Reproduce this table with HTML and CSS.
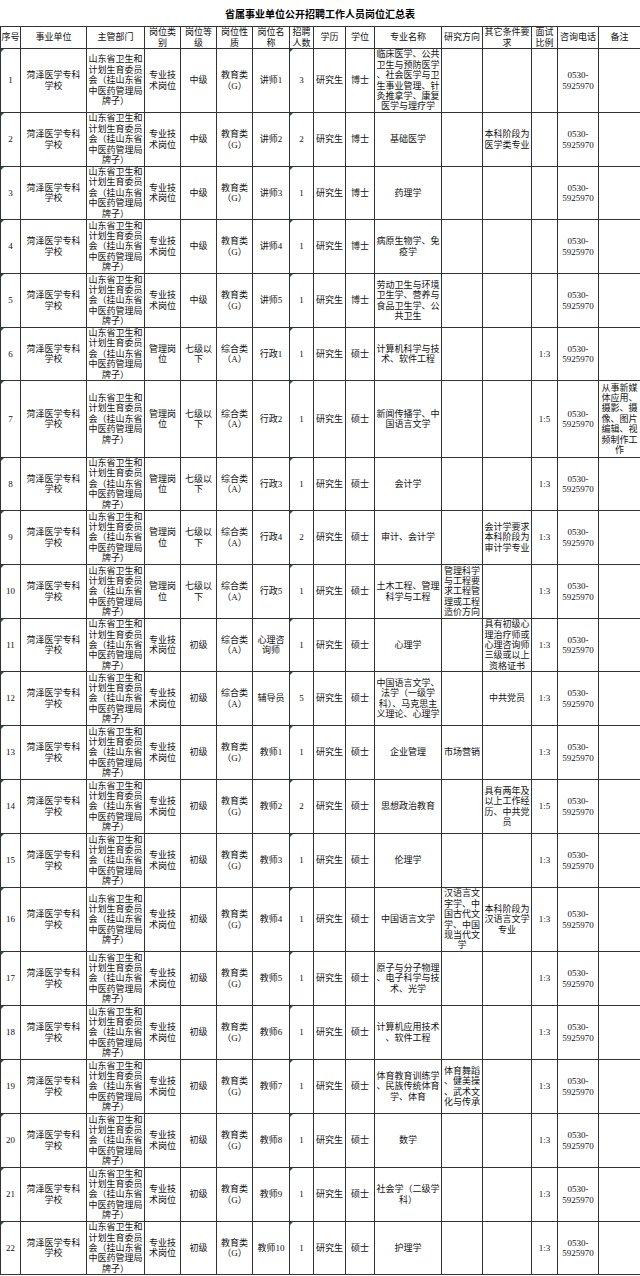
FILE: index.html
```html
<!DOCTYPE html>
<html lang="zh">
<head>
<meta charset="utf-8">
<title>省属事业单位公开招聘工作人员岗位汇总表</title>
<link rel="stylesheet" href="styles.css">
</head>
<body>
<div class="title">省属事业单位公开招聘工作人员岗位汇总表</div>
<table class="grid">
<colgroup>
<col class="c-no"><col class="c-unit"><col class="c-dept"><col class="c-type"><col class="c-level"><col class="c-nature"><col class="c-name"><col class="c-count"><col class="c-edu"><col class="c-deg"><col class="c-major"><col class="c-dir"><col class="c-other"><col class="c-ratio"><col class="c-tel"><col class="c-note">
</colgroup>
<tr class="head">
<td>序号</td><td>事业单位</td><td>主管部门</td><td>岗位类<br>别</td><td>岗位等<br>级</td><td>岗位性<br>质</td><td>岗位名<br>称</td><td>招聘<br>人数</td><td>学历</td><td>学位</td><td>专业名称</td><td>研究方向</td><td>其它条件要<br>求</td><td>面试<br>比例</td><td>咨询电话</td><td>备注</td>
</tr>
<tr class="r-six">
<td class="mk">1</td><td>菏泽医学专科<br>学校</td><td>山东省卫生和<br>计划生育委员<br>会（挂山东省<br>中医药管理局<br>牌子）</td><td>专业技<br>术岗位</td><td>中级</td><td>教育类<br>（G）</td><td>讲师1</td><td class="mk">3</td><td>研究生</td><td>博士</td><td>临床医学、公共<br>卫生与预防医学<br>、社会医学与卫<br>生事业管理、针<br>灸推拿学、康复<br>医学与理疗学</td><td></td><td></td><td></td><td>0530-<br>5925970</td><td></td>
</tr>
<tr class="row">
<td class="mk">2</td><td>菏泽医学专科<br>学校</td><td>山东省卫生和<br>计划生育委员<br>会（挂山东省<br>中医药管理局<br>牌子）</td><td>专业技<br>术岗位</td><td>中级</td><td>教育类<br>（G）</td><td>讲师2</td><td class="mk">2</td><td>研究生</td><td>博士</td><td>基础医学</td><td></td><td>本科阶段为<br>医学类专业</td><td></td><td>0530-<br>5925970</td><td></td>
</tr>
<tr class="row-s">
<td class="mk">3</td><td>菏泽医学专科<br>学校</td><td>山东省卫生和<br>计划生育委员<br>会（挂山东省<br>中医药管理局<br>牌子）</td><td>专业技<br>术岗位</td><td>中级</td><td>教育类<br>（G）</td><td>讲师3</td><td class="mk">1</td><td>研究生</td><td>博士</td><td>药理学</td><td></td><td></td><td></td><td>0530-<br>5925970</td><td></td>
</tr>
<tr class="row">
<td class="mk">4</td><td>菏泽医学专科<br>学校</td><td>山东省卫生和<br>计划生育委员<br>会（挂山东省<br>中医药管理局<br>牌子）</td><td>专业技<br>术岗位</td><td>中级</td><td>教育类<br>（G）</td><td>讲师4</td><td class="mk">1</td><td>研究生</td><td>博士</td><td>病原生物学、免<br>疫学</td><td></td><td></td><td></td><td>0530-<br>5925970</td><td></td>
</tr>
<tr class="row">
<td class="mk">5</td><td>菏泽医学专科<br>学校</td><td>山东省卫生和<br>计划生育委员<br>会（挂山东省<br>中医药管理局<br>牌子）</td><td>专业技<br>术岗位</td><td>中级</td><td>教育类<br>（G）</td><td>讲师5</td><td class="mk">1</td><td>研究生</td><td>博士</td><td>劳动卫生与环境<br>卫生学、营养与<br>食品卫生学、公<br>共卫生</td><td></td><td></td><td></td><td>0530-<br>5925970</td><td></td>
</tr>
<tr class="row-s">
<td class="mk">6</td><td>菏泽医学专科<br>学校</td><td>山东省卫生和<br>计划生育委员<br>会（挂山东省<br>中医药管理局<br>牌子）</td><td>管理岗<br>位</td><td>七级以<br>下</td><td>综合类<br>（A）</td><td>行政1</td><td class="mk">1</td><td>研究生</td><td>硕士</td><td>计算机科学与技<br>术、软件工程</td><td></td><td></td><td>1:3</td><td>0530-<br>5925970</td><td></td>
</tr>
<tr class="r-seven">
<td class="mk">7</td><td>菏泽医学专科<br>学校</td><td>山东省卫生和<br>计划生育委员<br>会（挂山东省<br>中医药管理局<br>牌子）</td><td>管理岗<br>位</td><td>七级以<br>下</td><td>综合类<br>（A）</td><td>行政2</td><td class="mk">1</td><td>研究生</td><td>硕士</td><td>新闻传播学、中<br>国语言文学</td><td></td><td></td><td>1:5</td><td>0530-<br>5925970</td><td>从事新媒<br>体应用、<br>摄影、摄<br>像、图片<br>编辑、视<br>频制作工<br>作</td>
</tr>
<tr class="row-s">
<td class="mk">8</td><td>菏泽医学专科<br>学校</td><td>山东省卫生和<br>计划生育委员<br>会（挂山东省<br>中医药管理局<br>牌子）</td><td>管理岗<br>位</td><td>七级以<br>下</td><td>综合类<br>（A）</td><td>行政3</td><td class="mk">1</td><td>研究生</td><td>硕士</td><td>会计学</td><td></td><td></td><td>1:3</td><td>0530-<br>5925970</td><td></td>
</tr>
<tr class="row">
<td class="mk">9</td><td>菏泽医学专科<br>学校</td><td>山东省卫生和<br>计划生育委员<br>会（挂山东省<br>中医药管理局<br>牌子）</td><td>管理岗<br>位</td><td>七级以<br>下</td><td>综合类<br>（A）</td><td>行政4</td><td class="mk">2</td><td>研究生</td><td>硕士</td><td>审计、会计学</td><td></td><td>会计学要求<br>本科阶段为<br>审计学专业</td><td>1:3</td><td>0530-<br>5925970</td><td></td>
</tr>
<tr class="row">
<td class="mk">10</td><td>菏泽医学专科<br>学校</td><td>山东省卫生和<br>计划生育委员<br>会（挂山东省<br>中医药管理局<br>牌子）</td><td>管理岗<br>位</td><td>七级以<br>下</td><td>综合类<br>（A）</td><td>行政5</td><td class="mk">1</td><td>研究生</td><td>硕士</td><td>土木工程、管理<br>科学与工程</td><td>管理科学<br>与工程要<br>求工程管<br>理或工程<br>造价方向</td><td></td><td>1:3</td><td>0530-<br>5925970</td><td></td>
</tr>
<tr class="row-s">
<td class="mk">11</td><td>菏泽医学专科<br>学校</td><td>山东省卫生和<br>计划生育委员<br>会（挂山东省<br>中医药管理局<br>牌子）</td><td>专业技<br>术岗位</td><td>初级</td><td>综合类<br>（A）</td><td>心理咨<br>询师</td><td class="mk">1</td><td>研究生</td><td>硕士</td><td>心理学</td><td></td><td>具有初级心<br>理治疗师或<br>心理咨询师<br>三级或以上<br>资格证书</td><td>1:3</td><td>0530-<br>5925970</td><td></td>
</tr>
<tr class="row">
<td class="mk">12</td><td>菏泽医学专科<br>学校</td><td>山东省卫生和<br>计划生育委员<br>会（挂山东省<br>中医药管理局<br>牌子）</td><td>专业技<br>术岗位</td><td>初级</td><td>综合类<br>（A）</td><td>辅导员</td><td class="mk">5</td><td>研究生</td><td>硕士</td><td>中国语言文学、<br>法学（一级学<br>科）、马克思主<br>义理论、心理学</td><td></td><td>中共党员</td><td>1:3</td><td>0530-<br>5925970</td><td></td>
</tr>
<tr class="row">
<td class="mk">13</td><td>菏泽医学专科<br>学校</td><td>山东省卫生和<br>计划生育委员<br>会（挂山东省<br>中医药管理局<br>牌子）</td><td>专业技<br>术岗位</td><td>初级</td><td>教育类<br>（G）</td><td>教师1</td><td class="mk">1</td><td>研究生</td><td>硕士</td><td>企业管理</td><td>市场营销</td><td></td><td>1:3</td><td>0530-<br>5925970</td><td></td>
</tr>
<tr class="row">
<td class="mk">14</td><td>菏泽医学专科<br>学校</td><td>山东省卫生和<br>计划生育委员<br>会（挂山东省<br>中医药管理局<br>牌子）</td><td>专业技<br>术岗位</td><td>初级</td><td>教育类<br>（G）</td><td>教师2</td><td class="mk">2</td><td>研究生</td><td>硕士</td><td>思想政治教育</td><td></td><td>具有两年及<br>以上工作经<br>历、中共党<br>员</td><td>1:5</td><td>0530-<br>5925970</td><td></td>
</tr>
<tr class="row">
<td class="mk">15</td><td>菏泽医学专科<br>学校</td><td>山东省卫生和<br>计划生育委员<br>会（挂山东省<br>中医药管理局<br>牌子）</td><td>专业技<br>术岗位</td><td>初级</td><td>教育类<br>（G）</td><td>教师3</td><td class="mk">1</td><td>研究生</td><td>硕士</td><td>伦理学</td><td></td><td></td><td>1:3</td><td>0530-<br>5925970</td><td></td>
</tr>
<tr class="r-six">
<td class="mk">16</td><td>菏泽医学专科<br>学校</td><td>山东省卫生和<br>计划生育委员<br>会（挂山东省<br>中医药管理局<br>牌子）</td><td>专业技<br>术岗位</td><td>初级</td><td>教育类<br>（G）</td><td>教师4</td><td class="mk">1</td><td>研究生</td><td>硕士</td><td>中国语言文学</td><td>汉语言文<br>字学、中<br>国古代文<br>学、中国<br>现当代文<br>学</td><td>本科阶段为<br>汉语言文学<br>专业</td><td>1:3</td><td>0530-<br>5925970</td><td></td>
</tr>
<tr class="row">
<td class="mk">17</td><td>菏泽医学专科<br>学校</td><td>山东省卫生和<br>计划生育委员<br>会（挂山东省<br>中医药管理局<br>牌子）</td><td>专业技<br>术岗位</td><td>初级</td><td>教育类<br>（G）</td><td>教师5</td><td class="mk">1</td><td>研究生</td><td>硕士</td><td>原子与分子物理<br>、电子科学与技<br>术、光学</td><td></td><td></td><td>1:3</td><td>0530-<br>5925970</td><td></td>
</tr>
<tr class="row">
<td class="mk">18</td><td>菏泽医学专科<br>学校</td><td>山东省卫生和<br>计划生育委员<br>会（挂山东省<br>中医药管理局<br>牌子）</td><td>专业技<br>术岗位</td><td>初级</td><td>教育类<br>（G）</td><td>教师6</td><td class="mk">1</td><td>研究生</td><td>硕士</td><td>计算机应用技术<br>、软件工程</td><td></td><td></td><td>1:3</td><td>0530-<br>5925970</td><td></td>
</tr>
<tr class="row">
<td class="mk">19</td><td>菏泽医学专科<br>学校</td><td>山东省卫生和<br>计划生育委员<br>会（挂山东省<br>中医药管理局<br>牌子）</td><td>专业技<br>术岗位</td><td>初级</td><td>教育类<br>（G）</td><td>教师7</td><td class="mk">1</td><td>研究生</td><td>硕士</td><td>体育教育训练学<br>、民族传统体育<br>学、体育</td><td>体育舞蹈<br>、健美操<br>、武术文<br>化与传承</td><td></td><td>1:3</td><td>0530-<br>5925970</td><td></td>
</tr>
<tr class="row">
<td class="mk">20</td><td>菏泽医学专科<br>学校</td><td>山东省卫生和<br>计划生育委员<br>会（挂山东省<br>中医药管理局<br>牌子）</td><td>专业技<br>术岗位</td><td>初级</td><td>教育类<br>（G）</td><td>教师8</td><td class="mk">1</td><td>研究生</td><td>硕士</td><td>数学</td><td></td><td></td><td>1:3</td><td>0530-<br>5925970</td><td></td>
</tr>
<tr class="row">
<td class="mk">21</td><td>菏泽医学专科<br>学校</td><td>山东省卫生和<br>计划生育委员<br>会（挂山东省<br>中医药管理局<br>牌子）</td><td>专业技<br>术岗位</td><td>初级</td><td>教育类<br>（G）</td><td>教师9</td><td class="mk">1</td><td>研究生</td><td>硕士</td><td>社会学（二级学<br>科）</td><td></td><td></td><td>1:3</td><td>0530-<br>5925970</td><td></td>
</tr>
<tr class="row-s">
<td class="mk">22</td><td>菏泽医学专科<br>学校</td><td>山东省卫生和<br>计划生育委员<br>会（挂山东省<br>中医药管理局<br>牌子）</td><td>专业技<br>术岗位</td><td>初级</td><td>教育类<br>（G）</td><td>教师10</td><td class="mk">1</td><td>研究生</td><td>硕士</td><td>护理学</td><td></td><td></td><td>1:3</td><td>0530-<br>5925970</td><td></td>
</tr>
</table>
</body>
</html>
```
FILE: styles.css
```css
html, body {
  margin: 0;
  padding: 0;
  background: #fff;
}
body {
  width: 640px;
  font-family: "Liberation Serif", "Noto Sans CJK SC", serif;
  font-size: 9px;
  color: #111;
}
.title {
  height: 26px;
  display: flex;
  align-items: center;
  justify-content: center;
  font-family: "Noto Sans CJK SC", sans-serif;
  font-weight: 700;
  font-size: 10px;
  color: #000;
}
.grid {
  border-collapse: collapse;
  table-layout: fixed;
  width: 640px;
}
.grid td {
  border: 1px solid #333;
  padding: 0;
  text-align: center;
  vertical-align: middle;
  line-height: 10.4px;
  white-space: nowrap;
  overflow: hidden;
}
.head { height: 22px; }
.row { height: 54px; }
.row-s { height: 53px; }
.r-six { height: 64px; }
.r-seven { height: 77px; }

.c-no { width: 20px; }
.c-unit { width: 66px; }
.c-dept { width: 58px; }
.c-type { width: 36px; }
.c-level { width: 36px; }
.c-nature { width: 36px; }
.c-name { width: 37px; }
.c-count { width: 24px; }
.c-edu { width: 32px; }
.c-deg { width: 29px; }
.c-major { width: 67px; }
.c-dir { width: 41px; }
.c-other { width: 49px; }
.c-ratio { width: 26px; }
.c-tel { width: 41px; }
.c-note { width: 42px; }

.grid td.mk { position: relative; }
.grid td.mk::before {
  content: "";
  position: absolute;
  left: 0;
  top: 0;
  border-top: 3px solid #2f5a2f;
  border-right: 3px solid transparent;
}
```
